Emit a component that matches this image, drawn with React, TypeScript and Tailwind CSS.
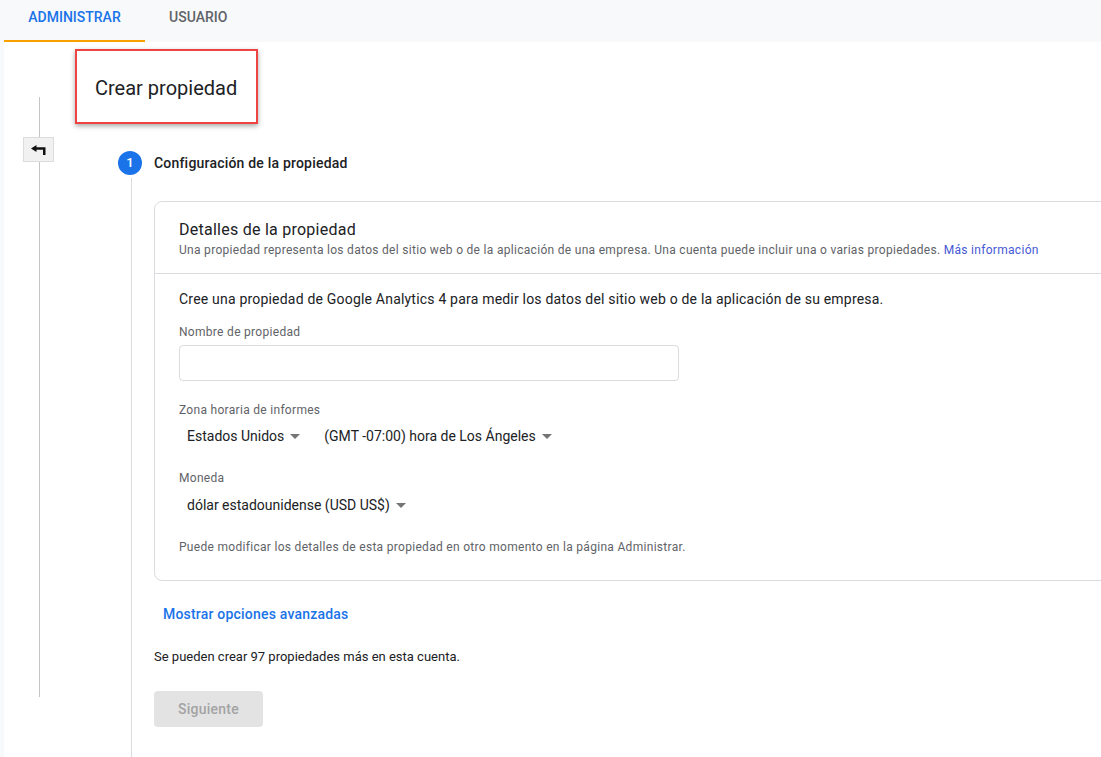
const Caret = () => (
  <svg width="10" height="5" viewBox="0 0 10 5" className="shrink-0">
    <path d="M0 0 L5 5 L10 0 Z" fill="#757575" />
  </svg>
)

const Dropdown = ({ label }: { label: string }) => (
  <div className="flex h-[28px] items-center gap-[6px] px-2 text-[14px] text-[#202124]">
    <span>{label}</span>
    <Caret />
  </div>
)

export default function App() {
  return (
    <div
      className="flex h-[757px] w-[1101px] flex-col overflow-hidden bg-white"
      style={{ fontFamily: 'Roboto, "Liberation Sans", sans-serif' }}
    >
      {/* tabs */}
      <div className="flex h-[42px] shrink-0 bg-[#f8f9fa] pl-[4px]">
        <div className="h-[42px] w-[141px] border-b-2 border-[#f9a000] pt-[7px] text-center text-[14px] font-medium leading-[20px] text-[#1a73e8]">
          ADMINISTRAR
        </div>
        <div className="h-[42px] px-[24px] pt-[7px] text-[14px] font-medium leading-[20px] text-[#5f6368]">
          USUARIO
        </div>
      </div>

      <div className="flex flex-1">
        <div className="w-[4px] shrink-0 bg-[#f8f9fa]"></div>

        {/* back column */}
        <div className="flex w-[71px] shrink-0 flex-col">
          <div className="ml-[35px] mt-[55px] h-[40px] w-px bg-[#c4c4c4]"></div>
          <div className="ml-[19px] flex h-[25px] w-[31px] items-center justify-center border border-[#dcdcdc] bg-[#f1f1f1]">
            <svg width="16" height="10" viewBox="0 0 16 10">
              <path d="M0 3.5 L5.5 0 L5.5 2.3 L14.5 2.3 L14.5 10 L12 10 L12 4.7 L5.5 4.7 L5.5 7 Z" fill="#111" />
            </svg>
          </div>
          <div className="ml-[35px] h-[535px] w-px bg-[#c4c4c4]"></div>
        </div>

        {/* main */}
        <div className="flex shrink-0 flex-col">
          <div className="mt-[7px] flex h-[75px] w-[183px] items-center border-2 border-[#ee4343] pl-[18px] pt-[2px] shadow-[0_2px_5px_rgba(0,0,0,0.35)]">
            <span className="text-[20px] text-[#202124]">Crear propiedad</span>
          </div>

          <div className="mt-[27px] flex h-6 items-center pl-[43px]">
            <div className="flex h-6 w-6 items-center justify-center rounded-full bg-[#1a73e8] text-[13px] font-medium text-white">
              1
            </div>
            <span className="ml-[12px] text-[14px] font-medium tracking-[0.2px] text-[#202124]">
              Configuración de la propiedad
            </span>
          </div>

          <div className="flex flex-1 pl-[43px]">
            <div className="w-6 shrink-0">
              <div className="ml-[13px] mt-[3px] h-[600px] w-px bg-[#dadce0]"></div>
            </div>

            <div className="ml-[12px] flex flex-col pt-[26px]">
              {/* card */}
              <div className="w-[1000px] rounded-lg border border-[#dadce0]">
                <div className="border-b border-[#dadce0] px-[24px] pb-[14px] pt-[17px]">
                  <div className="text-[16px] leading-[22px] tracking-[0.25px] text-[#202124]">Detalles de la propiedad</div>
                  <div className="text-[12px] leading-[18px] tracking-[0.3px] text-[#5f6368]">
                    Una propiedad representa los datos del sitio web o de la aplicación de una empresa. Una cuenta puede incluir una o varias propiedades.{' '}
                    <span className="text-[#4659d4]">Más información</span>
                  </div>
                </div>

                <div className="px-[24px] pb-[25px] pt-[15px]">
                  <div className="text-[14px] leading-[20px] tracking-[0.2px] text-[#202124]">
                    Cree una propiedad de Google Analytics 4 para medir los datos del sitio web o de la aplicación de su empresa.
                  </div>

                  <div className="mt-[15px] text-[12px] leading-[16px] tracking-[0.3px] text-[#5f6368]">Nombre de propiedad</div>
                  <div className="mt-[5px] h-[36px] w-[500px] rounded border border-[#dadce0]"></div>

                  <div className="mt-[21px] text-[12px] leading-[16px] tracking-[0.3px] text-[#5f6368]">Zona horaria de informes</div>
                  <div className="mt-[4px] flex gap-[8px]">
                    <Dropdown label="Estados Unidos" />
                    <Dropdown label="(GMT -07:00) hora de Los Ángeles" />
                  </div>

                  <div className="mt-[20px] text-[12px] leading-[16px] tracking-[0.3px] text-[#5f6368]">Moneda</div>
                  <div className="mt-[5px] flex">
                    <Dropdown label="dólar estadounidense (USD US$)" />
                  </div>

                  <div className="mt-[20px] text-[12px] leading-[16px] tracking-[0.3px] text-[#5f6368]">
                    Puede modificar los detalles de esta propiedad en otro momento en la página Administrar.
                  </div>
                </div>
              </div>

              <div className="ml-[9px] mt-[23px] text-[14px] font-medium leading-[20px] tracking-[0.2px] text-[#1a73e8]">
                Mostrar opciones avanzadas
              </div>

              <div className="mt-[25px] text-[13px] leading-[16px] text-[#202124]">
                Se pueden crear 97 propiedades más en esta cuenta.
              </div>

              <button className="mt-[26px] h-[36px] w-[109px] rounded bg-[#e3e3e3] text-[14px] font-medium tracking-[0.25px] text-[#a3a3a3]">
                Siguiente
              </button>
            </div>
          </div>
        </div>
      </div>
    </div>
  )
}
